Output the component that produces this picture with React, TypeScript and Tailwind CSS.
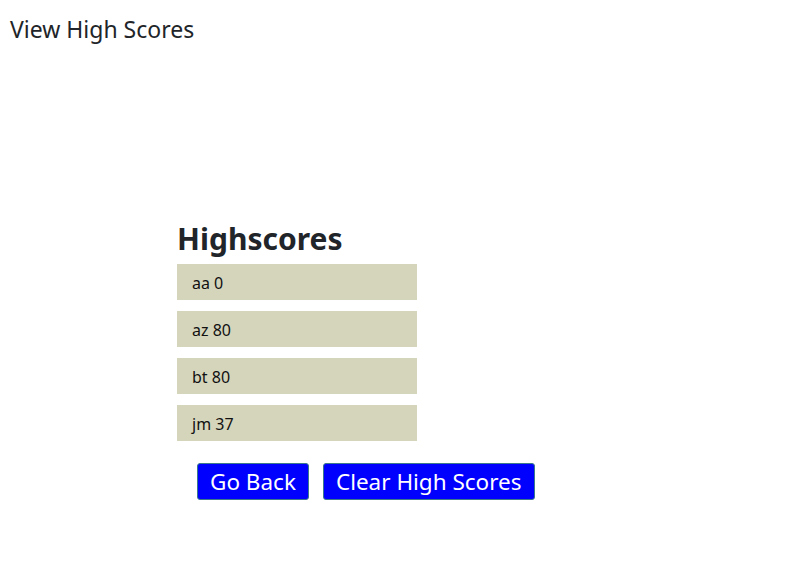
export default function App() {
  const scores = ["aa 0", "az 80", "bt 80", "jm 37"];

  return (
    <div className="min-h-[567px] bg-white text-[#212529]" style={{ fontFamily: '"Noto Sans", "Open Sans", sans-serif' }}>
      <header className="px-[10px] pt-[13px]">
        <span className="text-[23px] leading-[32px]">View High Scores</span>
      </header>

      <main className="ml-[177px] mt-[176px] w-[240px]">
        <h2 className="text-[30px] font-bold leading-[36px] mb-[7px]">Highscores</h2>
        <ul className="flex flex-col gap-[11px]">
          {scores.map((s) => (
            <li key={s} className="h-[36px] bg-[#d5d5bc] pl-[15px] text-[16px] leading-[38px] text-[#111]">
              {s}
            </li>
          ))}
        </ul>
        <div className="mt-[22px] ml-[20px] flex gap-[14px] whitespace-nowrap">
          <button className="h-[37px] rounded-[3px] border border-[#3a7a8a] bg-[#0000ff] px-[12px] text-[22.5px] leading-[34px] text-white">
            Go Back
          </button>
          <button className="h-[37px] rounded-[3px] border border-[#3a7a8a] bg-[#0000ff] px-[12px] text-[22.5px] leading-[34px] text-white">
            Clear High Scores
          </button>
        </div>
      </main>
    </div>
  );
}
